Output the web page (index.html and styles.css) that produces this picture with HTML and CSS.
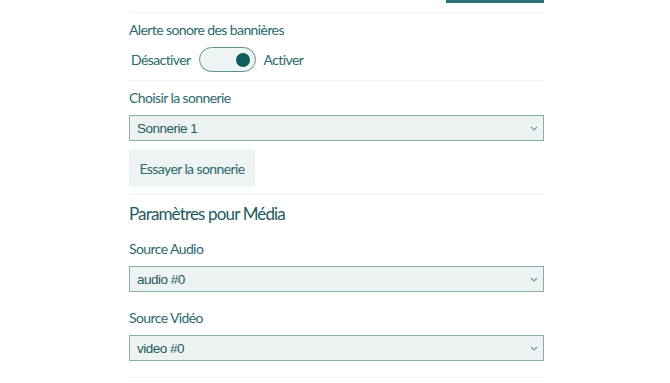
FILE: index.html
```html
<!DOCTYPE html>
<html>
<head>
  <title>Paramètres</title>
  <link rel="stylesheet" href="styles.css">
</head>
<body>
  <div class="panel">
    <div class="tabs">
      <div class="tab-indicator"></div>
    </div>

    <!-- Alerte sonore -->
    <div class="section">
      <div class="label">Alerte sonore des bannières</div>
      <div class="toggle-row">
        <span class="toggle-text">Désactiver</span>
        <div class="toggle"><div class="knob"></div></div>
        <span class="toggle-text">Activer</span>
      </div>
    </div>

    <!-- Sonnerie -->
    <div class="section">
      <div class="label">Choisir la sonnerie</div>
      <div class="select">
        <span>Sonnerie 1</span>
        <svg class="chevron" width="8" height="5" viewBox="0 0 8 5"><path d="M1 1 L4 4 L7 1" fill="none" stroke="#6f9a9c" stroke-width="1.2"/></svg>
      </div>
      <button class="try-button">Essayer la sonnerie</button>
    </div>

    <!-- Média -->
    <div class="section section-media">
      <h2>Paramètres pour Média</h2>
      <div class="label label-media">Source Audio</div>
      <div class="select">
        <span>audio #0</span>
        <svg class="chevron" width="8" height="5" viewBox="0 0 8 5"><path d="M1 1 L4 4 L7 1" fill="none" stroke="#6f9a9c" stroke-width="1.2"/></svg>
      </div>
      <div class="label label-video">Source Vidéo</div>
      <div class="select">
        <span>video #0</span>
        <svg class="chevron" width="8" height="5" viewBox="0 0 8 5"><path d="M1 1 L4 4 L7 1" fill="none" stroke="#6f9a9c" stroke-width="1.2"/></svg>
      </div>
    </div>
    <div class="section"></div>
  </div>
</body>
</html>
```

FILE: styles.css
```css
body {
  margin: 0;
  background-color: #fff;
  font-family: Lato, "Noto Sans", sans-serif;
  color: #2a6a6c;
}

.panel {
  width: 415px;
  margin-left: 129px;
}

.tabs {
  display: flex;
  justify-content: flex-end;
  height: 12px;
}

.tab-indicator {
  width: 98px;
  height: 3px;
  background-color: #2c7378;
}

.section {
  border-top: 1px solid #edf2f2;
  padding: 8px 0;
}

.label {
  font-size: 14px;
  letter-spacing: -0.6px;
  line-height: 18px;
}

.toggle-row {
  display: flex;
  align-items: center;
  margin-top: 8px;
  height: 25px;
}

.toggle-text {
  font-size: 14px;
  letter-spacing: -0.6px;
  margin: 0 8px 0 2px;
}

.toggle {
  width: 55px;
  height: 23px;
  border: 1px solid #5d9295;
  border-radius: 13px;
  background-color: #eef3f3;
  display: flex;
  align-items: center;
  justify-content: flex-end;
  margin-right: 6px;
}

.knob {
  width: 14px;
  height: 14px;
  border-radius: 50%;
  background-color: #0f5c5e;
  margin-right: 5px;
}

.select {
  display: flex;
  align-items: center;
  justify-content: space-between;
  height: 24px;
  margin-top: 8px;
  padding: 0 5px 0 7px;
  border: 1px solid #86aeb0;
  background-color: #edf3f3;
  font-family: "Liberation Sans", Arial, sans-serif;
  font-size: 13.5px;
  letter-spacing: -0.5px;
  color: #1d5b5e;
}

.try-button {
  display: block;
  margin-top: 9px;
  width: 126px;
  height: 36px;
  border: none;
  background-color: #eef3f3;
  font-family: Lato, "Noto Sans", sans-serif;
  font-size: 14px;
  letter-spacing: -0.6px;
  color: #2a6a6c;
  padding: 0;
}

h2 {
  margin: 0;
  font-size: 17px;
  letter-spacing: -0.85px;
  font-weight: normal;
  line-height: 22px;
  color: #1d5b5e;
}

.label-media {
  margin-top: 15px;
}

.label-video {
  margin-top: 17px;
}

.section-media {
  padding-bottom: 16px;
}
```
